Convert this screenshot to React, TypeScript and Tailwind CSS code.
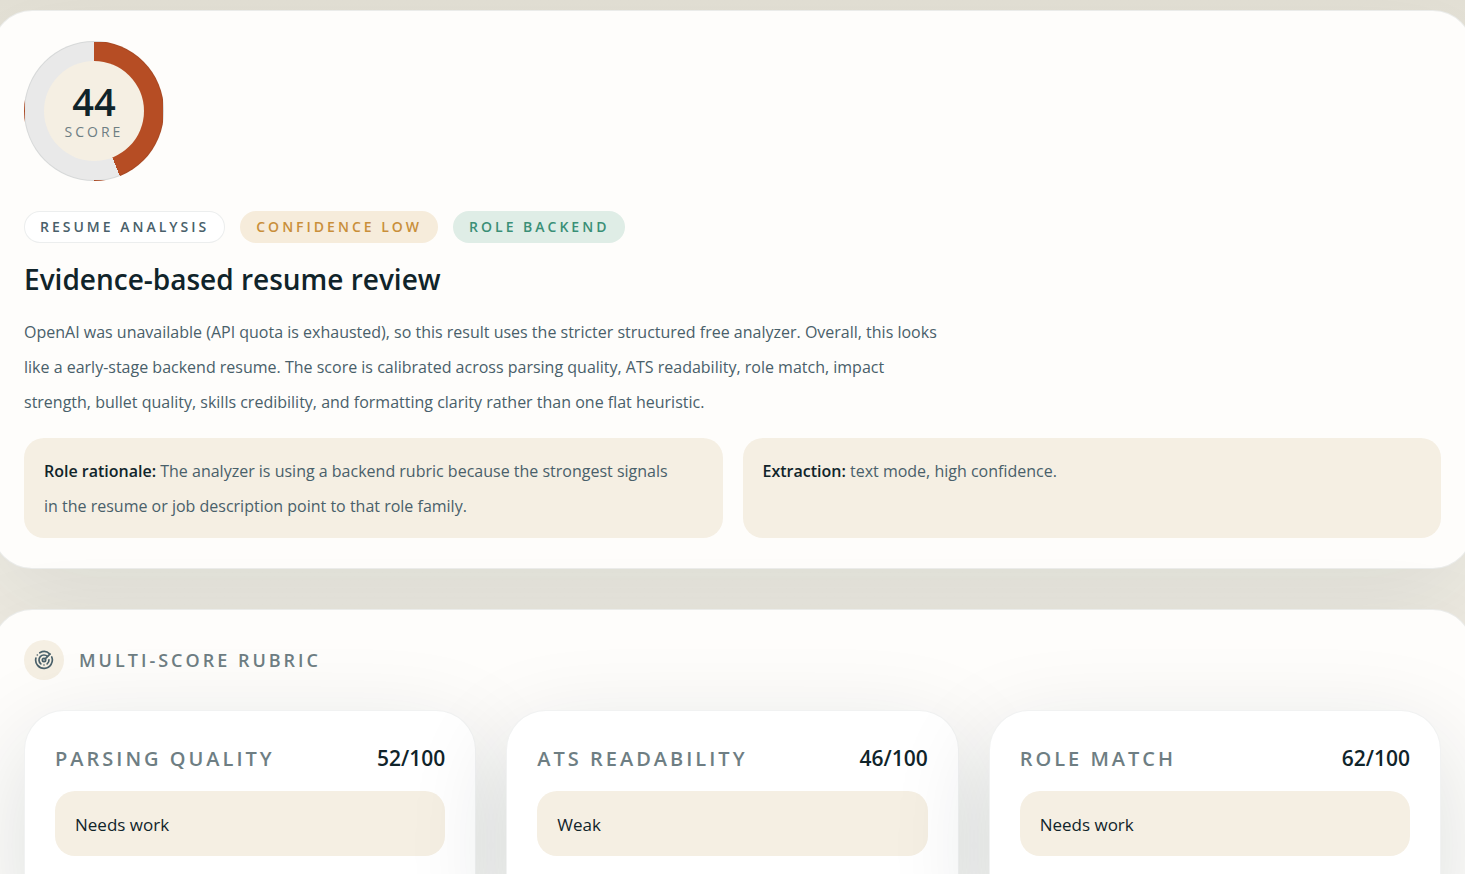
import { Radar } from "lucide-react";

interface Rubric {
  name: string;
  score: number;
  verdict: string;
}

const rubrics: Rubric[] = [
  { name: "Parsing quality", score: 52, verdict: "Needs work" },
  { name: "ATS readability", score: 46, verdict: "Weak" },
  { name: "Role match", score: 62, verdict: "Needs work" },
];

const panelClass =
  "-mx-2 rounded-[40px] border border-[#10242a]/8 bg-[#fefdfb] px-[31px] py-[30px] shadow-[0_30px_100px_rgba(16,36,42,0.08)]";

function ScoreRing({ score }: { score: number }) {
  return (
    <div
      className="flex size-[140px] items-center justify-center rounded-full border border-[#10242a]/8"
      style={{
        backgroundImage: `conic-gradient(#b64d24 ${score}%, #e9e9e9 ${score}%)`,
      }}
    >
      <div className="flex size-[100px] flex-col items-center justify-center rounded-full bg-[#f5efe3]">
        <span className="text-[38px] leading-[42px] font-semibold">
          {score}
        </span>
        <span className="text-[14px] leading-[20px] tracking-[3px] text-[#6e7e83] uppercase">
          Score
        </span>
      </div>
    </div>
  );
}

function RubricCard({ rubric }: { rubric: Rubric }) {
  return (
    <article className="rounded-[40px] border border-[#10242a]/6 bg-white p-[30px] pb-16 shadow-[0_30px_100px_rgba(16,36,42,0.14)]">
      <div className="flex items-center justify-between">
        <h3 className="text-[20px] font-semibold tracking-[3px] text-[#6e7e83] uppercase">
          {rubric.name}
        </h3>
        <span className="text-[21px] font-semibold">{rubric.score}/100</span>
      </div>
      <p className="mt-[15px] rounded-[20px] bg-[#f5efe3] px-5 pt-4 pb-[14px] text-[17px]">
        {rubric.verdict}
      </p>
    </article>
  );
}

function App() {
  return (
    <main className="flex h-screen flex-col gap-10 overflow-hidden bg-linear-to-b from-[#e4e1d6] to-[#efece3] to-30% pt-[10px] font-['Open_Sans',sans-serif] text-[16px] leading-[35px] text-[#10242a]">
      <section className={panelClass}>
        <ScoreRing score={44} />

        <div className="mt-[30px] flex flex-wrap gap-[15px] text-[14px] leading-[30px] font-semibold tracking-[3px] uppercase">
          <span className="rounded-full border border-[#10242a]/8 bg-white px-[15px] text-[#49606a]">
            Resume analysis
          </span>
          <span className="rounded-full border border-transparent bg-[#f6ecdb] px-[15px] text-[#c98f3a]">
            Confidence low
          </span>
          <span className="rounded-full border border-transparent bg-[#dfede6] px-[15px] text-[#3a8f76]">
            Role backend
          </span>
        </div>

        <h1 className="mt-4 text-[28px] leading-[40px] font-semibold">
          Evidence-based resume review
        </h1>
        <p className="mt-4 max-w-[930px] text-[#49606a]">
          OpenAI was unavailable (API quota is exhausted), so this result uses
          the stricter structured free analyzer. Overall, this looks like a
          early-stage backend resume. The score is calibrated across parsing
          quality, ATS readability, role match, impact strength, bullet quality,
          skills credibility, and formatting clarity rather than one flat
          heuristic.
        </p>

        <div className="mt-[18px] grid grid-cols-2 gap-5 text-[#49606a]">
          <p className="rounded-[20px] bg-[#f5efe3] pt-4 pr-10 pb-[14px] pl-5">
            <strong className="font-semibold text-[#10242a]">
              Role rationale:
            </strong>{" "}
            The analyzer is using a backend rubric because the strongest signals
            in the resume or job description point to that role family.
          </p>
          <p className="rounded-[20px] bg-[#f5efe3] pt-4 pr-10 pb-[14px] pl-5">
            <strong className="font-semibold text-[#10242a]">
              Extraction:
            </strong>{" "}
            text mode, high confidence.
          </p>
        </div>
      </section>

      <section className={panelClass}>
        <div className="flex items-center gap-[15px]">
          <span className="flex size-10 items-center justify-center rounded-full bg-[#f5efe3] text-[#49606a]">
            <Radar size={20} />
          </span>
          <h2 className="text-[18px] font-semibold tracking-[3px] text-[#6e7e83] uppercase">
            Multi-score rubric
          </h2>
        </div>

        <div className="mt-[30px] grid grid-cols-3 gap-[30px]">
          {rubrics.map((rubric) => (
            <RubricCard key={rubric.name} rubric={rubric} />
          ))}
        </div>
      </section>
    </main>
  );
}

export default App;
